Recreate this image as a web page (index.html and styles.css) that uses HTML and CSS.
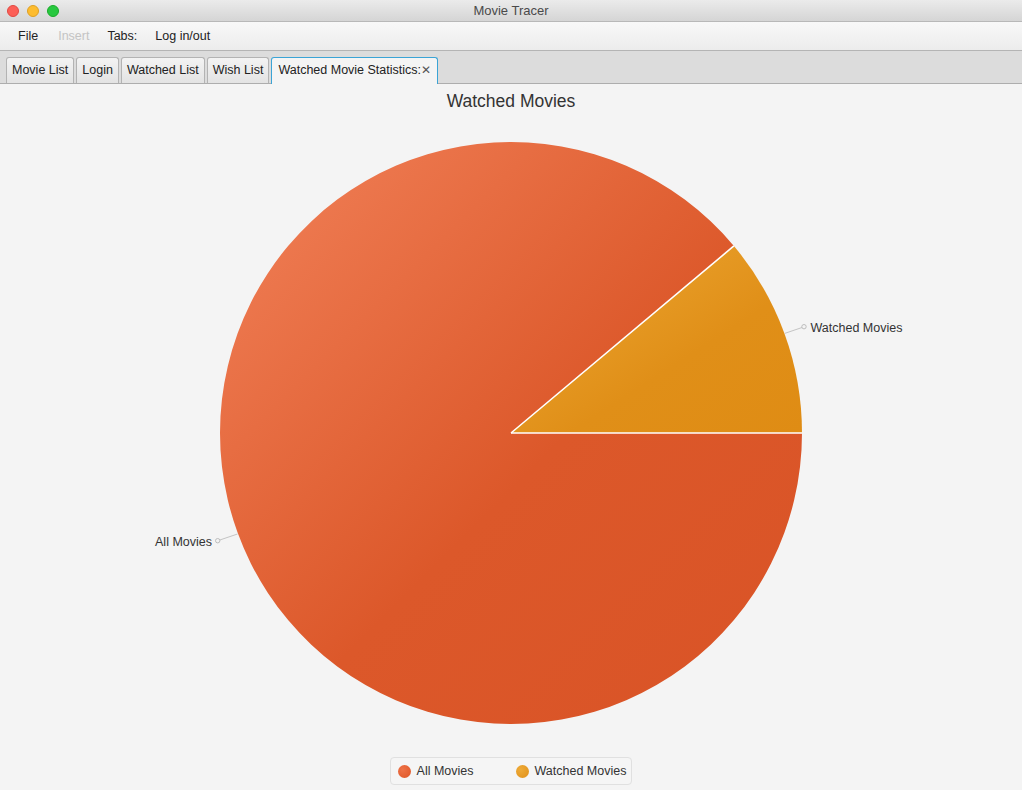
FILE: index.html
```html
<!DOCTYPE html>
<html lang="en">
<head>
  <meta charset="UTF-8">
  <title>Movie Tracer</title>
  <link rel="stylesheet" href="styles.css">
</head>
<body>
  <div class="window">
    <div class="titlebar">
      <div class="lights">
        <span class="light red"></span>
        <span class="light yellow"></span>
        <span class="light green"></span>
      </div>
      <span class="title">Movie Tracer</span>
    </div>

    <div class="menubar">
      <span class="menu">File</span>
      <span class="menu disabled">Insert</span>
      <span class="menu">Tabs:</span>
      <span class="menu">Log in/out</span>
    </div>

    <div class="tabbar">
      <span class="tab">Movie List</span>
      <span class="tab">Login</span>
      <span class="tab">Watched List</span>
      <span class="tab">Wish List</span>
      <span class="tab selected">Watched Movie Statistics:<span class="close">✕</span></span>
    </div>

    <div class="chart">
      <div class="chart-title">Watched Movies</div>
      <svg class="pie" width="1022" height="640" viewBox="0 0 1022 640">
        <defs>
          <linearGradient id="gAll" x1="0" y1="0" x2="1" y2="1">
            <stop offset="0" stop-color="#f2825a"/>
            <stop offset="0.55" stop-color="#dc582a"/>
            <stop offset="1" stop-color="#d95326"/>
          </linearGradient>
          <linearGradient id="gWatched" x1="0" y1="0" x2="1" y2="1">
            <stop offset="0" stop-color="#eeaa36"/>
            <stop offset="0.6" stop-color="#e08f18"/>
            <stop offset="1" stop-color="#df8c14"/>
          </linearGradient>
        </defs>
        <!-- center 511,321 radius 291 -->
        <path d="M511,321 L733.9,133.95 A291,291 0 1,0 802,321 Z" fill="url(#gAll)"/>
        <path d="M511,321 L802,321 A291,291 0 0,0 733.9,133.95 Z" fill="url(#gWatched)"/>
        <line x1="511" y1="321" x2="802" y2="321" class="slice-edge"/>
        <line x1="511" y1="321" x2="733.9" y2="133.95" class="slice-edge"/>

        <line x1="785" y1="221.3" x2="802" y2="215.5" class="label-line"/>
        <circle cx="804" cy="214.7" r="2.2" class="label-dot"/>
        <text x="810.5" y="219.7" class="label">Watched Movies</text>

        <line x1="237.5" y1="422" x2="219.8" y2="428" class="label-line"/>
        <circle cx="217.7" cy="428.7" r="2.2" class="label-dot"/>
        <text x="212" y="433.5" class="label" text-anchor="end">All Movies</text>
      </svg>
      <div class="legend">
        <span class="legend-item"><span class="swatch all"></span>All Movies</span>
        <span class="legend-item"><span class="swatch watched"></span>Watched Movies</span>
      </div>
    </div>
  </div>
</body>
</html>
```

FILE: styles.css
```css
body {
  margin: 0;
  font-family: "Liberation Sans", Arial, sans-serif;
  color: #333;
}
.window {
  width: 1022px;
  height: 790px;
  background: #f4f4f4;
  overflow: hidden;
}
.titlebar {
  position: relative;
  height: 21px;
  border-bottom: 1px solid #b8b8b8;
  background: linear-gradient(#ebebeb, #d5d5d5);
  display: flex;
  align-items: center;
  justify-content: center;
}
.lights {
  position: absolute;
  left: 7px;
  top: 5px;
  display: flex;
  gap: 8px;
}
.light {
  width: 12px;
  height: 12px;
  border-radius: 50%;
  box-sizing: border-box;
}
.red { background: #fc5f57; border: 1px solid #e14942; }
.yellow { background: #fdbc2e; border: 1px solid #dfa023; }
.green { background: #28c840; border: 1px solid #1aab29; }
.title {
  font-size: 13px;
  color: #4a4a4a;
}
.menubar {
  height: 28px;
  border-bottom: 1px solid #b4b4b4;
  background: linear-gradient(#f8f8f8, #ececec);
  display: flex;
  align-items: center;
  padding-left: 9px;
  font-size: 12.5px;
}
.menu {
  padding: 0 9px;
  color: #222;
}
.menu:first-child {
  margin-right: 2px;
}
.menu.disabled {
  color: #c4c4c4;
}
.tabbar {
  height: 32px;
  border-bottom: 1px solid #adadad;
  background: #dcdcdc;
  display: flex;
  align-items: flex-end;
  gap: 2px;
  padding-left: 6px;
  font-size: 12.5px;
}
.tab {
  height: 25px;
  line-height: 25px;
  padding: 0 5px;
  border: 1px solid #b3b3b3;
  border-bottom: none;
  border-radius: 3px 3px 0 0;
  background: linear-gradient(#f3f3f3, #e3e3e3);
  color: #222;
  white-space: nowrap;
}
.tab.selected {
  position: relative;
  height: 26px;
  margin-bottom: -1px;
  padding: 0 6px 0 6px;
  border-color: #3ba4d6;
  background: #f4f4f4;
}
.close {
  margin-left: 0;
  font-size: 12px;
  color: #555;
}
.chart {
  display: flex;
  flex-direction: column;
  align-items: center;
}
.chart-title {
  padding-top: 6px;
  font-size: 17.5px;
  line-height: 22px;
  color: #333;
}
.pie {
  display: block;
}
.slice-edge {
  stroke: #ffffff;
  stroke-width: 1.6;
}
.label {
  font-family: "Liberation Sans", Arial, sans-serif;
  font-size: 12.5px;
  fill: #333;
}
.label-line {
  stroke: #c4c4c4;
  stroke-width: 1;
}
.label-dot {
  fill: none;
  stroke: #bdbdbd;
  stroke-width: 1;
}
.legend {
  margin-top: 5px;
  height: 26px;
  padding: 0 5px 0 7px;
  border: 1px solid #e0e0e0;
  border-radius: 4px;
  background: #f5f5f5;
  display: flex;
  align-items: center;
  gap: 42px;
  font-size: 12.5px;
}
.legend-item {
  display: flex;
  align-items: center;
  gap: 6px;
}
.swatch {
  width: 13px;
  height: 13px;
  border-radius: 50%;
}
.swatch.all {
  background: radial-gradient(circle at 35% 35%, #ee7247, #de5526);
}
.swatch.watched {
  background: radial-gradient(circle at 35% 35%, #eeab38, #e0901a);
}
```
